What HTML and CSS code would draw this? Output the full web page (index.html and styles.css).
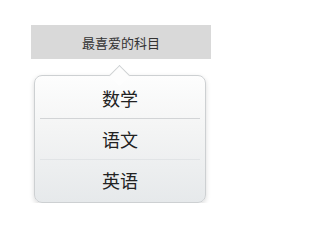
FILE: index.html
```html
<!DOCTYPE html>
<html lang="zh">
<head>
<meta charset="utf-8">
<link rel="stylesheet" href="styles.css">
</head>
<body>
<div class="page">
  <div class="trigger">最喜爱的科目</div>
  <div class="popover">
    <div class="arrow"></div>
    <div class="item">数学</div>
    <div class="item">语文</div>
    <div class="item last">英语</div>
  </div>
</div>
</body>
</html>
```
FILE: styles.css
```css
html, body {
  margin: 0;
  padding: 0;
  background: #ffffff;
}
.page {
  padding: 25px 0 0 31px;
  font-family: "Noto Sans CJK SC", "Noto Sans", sans-serif;
}
.trigger {
  width: 180px;
  height: 34px;
  background: #d9d9d9;
  color: #333333;
  font-size: 13px;
  display: flex;
  align-items: center;
  justify-content: center;
}
.popover {
  position: relative;
  margin: 16px 0 0 3px;
  width: 170px;
  padding: 2px 0;
  border: 1px solid #cdd0d2;
  border-radius: 8px;
  background: linear-gradient(#fdfdfd, #f3f4f4 45%, #e6e9eb);
  box-shadow: 0 2px 5px rgba(0, 0, 0, 0.15);
}
.arrow {
  position: absolute;
  left: 77px;
  top: -8px;
  width: 14px;
  height: 14px;
  background: #fdfdfd;
  border-top: 1px solid #cdd0d2;
  border-left: 1px solid #cdd0d2;
  transform: rotate(45deg);
}
.item {
  position: relative;
  height: 40px;
  margin: 0 5px;
  border-bottom: 1px solid #d2d4d6;
  display: flex;
  align-items: center;
  justify-content: center;
  font-size: 18px;
  color: #222222;
}
.item:nth-child(3) {
  border-bottom-color: #e1e4e6;
}
.item.last {
  border-bottom: none;
}
```
